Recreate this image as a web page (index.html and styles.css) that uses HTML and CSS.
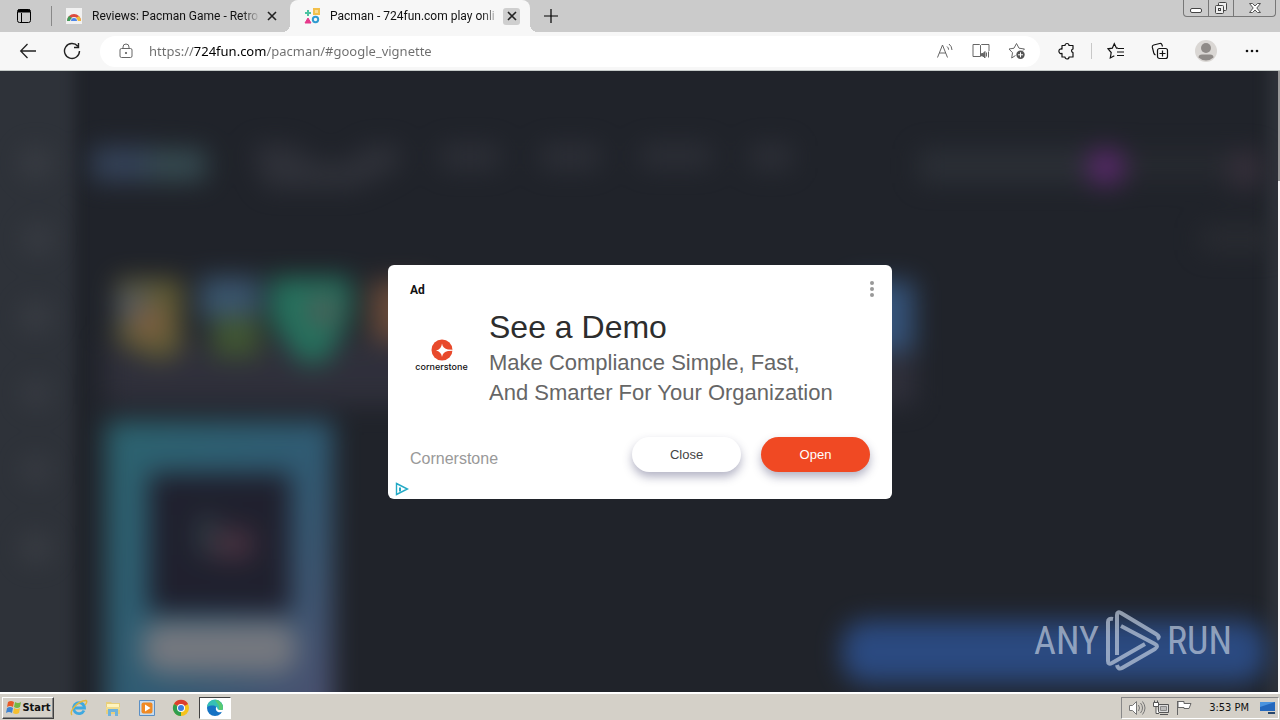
FILE: index.html
```html
<!DOCTYPE html>
<html lang="en">
<head>
<meta charset="UTF-8">
<meta name="viewport" content="width=device-width, initial-scale=1.0">
<title>Pacman - 724fun.com play online</title>
<link rel="stylesheet" href="styles.css">
</head>
<body>

<header class="tabstrip">
    <button class="tab-actions" aria-label="Tab actions">
        <svg width="16" height="16" viewBox="0 0 16 16" fill="none" stroke="#000"><rect x="1.500" y="1.500" width="13" height="13" rx="2"/><path d="M2 3h12" stroke-width="3"/><path d="M5.500 5v9"/></svg>
    </button>
    <div class="tab">
        <svg width="16" height="16" viewBox="0 0 16 16"><path d="M0 0h16v16H0z" fill="#f1f1f1"/><path d="M1 13a7 7 0 0 1 14 0h-3a4 4 0 0 0-8 0z" fill="#dd4b3e"/><path d="M1 13a7 7 0 0 1 2-5l3 2a4 4 0 0 0-2 3z" fill="#3f9c5a"/><path d="M15 13a7 7 0 0 0-2-5l-3 2a4 4 0 0 1 2 3z" fill="#f2bd3b"/><path d="M5 13a3 3 0 0 1 6 0z" fill="#4d86e8"/></svg>
        <span class="tab-title">Reviews: Pacman Game - Retro</span>
        <button class="tab-close" aria-label="Close tab"><svg width="10" height="10" viewBox="0 0 10 10" stroke="#222" stroke-width="1.6"><path d="M1 1l8 8M9 1l-8 8"/></svg></button>
    </div>
    <div class="tab active">
        <svg width="16" height="16" viewBox="0 0 16 16" fill="none" stroke-width="2"><path d="M4 2v6M1 5h6" stroke="#4cc3a0"/><rect x="10" y="1" width="5" height="5" stroke="#f3c04b" fill="#f8dc95"/><path d="M4 10l3 5H1z" stroke="#e6398b" fill="#e6398b" stroke-width="1"/><circle cx="11.500" cy="11.500" r="2.700" stroke="#2f9bd0"/></svg>
        <span class="tab-title">Pacman - 724fun.com play onli</span>
        <button class="tab-close" aria-label="Close tab"><svg width="10" height="10" viewBox="0 0 10 10" stroke="#222" stroke-width="1.6"><path d="M1 1l8 8M9 1l-8 8"/></svg></button>
    </div>
    <button class="new-tab" aria-label="New tab"><svg width="14" height="14" viewBox="0 0 14 14" stroke="#000"><path d="M7 0v14M0 7h14" stroke-width="1.2"/></svg></button>
    <div class="window-buttons">
        <button aria-label="Minimize"><svg width="14" height="14" viewBox="0 0 14 14" fill="#fff" stroke="#444"><rect x="1.500" y="7.500" width="11" height="4" rx="1.500"/></svg></button>
        <button aria-label="Restore"><svg width="14" height="14" viewBox="0 0 14 14" fill="#eee" stroke="#444"><rect x="4.500" y="1.500" width="8" height="8" rx="1"/><rect x="1.500" y="4.500" width="8" height="8" rx="1"/><rect x="4.500" y="7.500" width="2" height="2"/></svg></button>
        <button class="wide" aria-label="Close"><svg width="14" height="14" viewBox="0 0 14 14" fill="#fff" stroke="#555"><path d="M1.500 2.500h3L7 5l2.500-2.500h3L8.800 7l3.700 4.500h-3L7 9l-2.500 2.500h-3L5.200 7z"/></svg></button>
    </div>
</header>

<nav class="toolbar">
    <button aria-label="Back"><svg width="18" height="18" viewBox="0 0 18 18" fill="none" stroke="#222" stroke-width="1.300"><path d="M17 9H2M8.500 2L1.700 9l6.800 7"/></svg></button>
    <button aria-label="Refresh"><svg width="18" height="18" viewBox="0 0 18 18" fill="none" stroke="#222" stroke-width="1.400"><path d="M16.500 9A7.500 7.500 0 1 1 14.800 4.200M15.500 1v4.500H11"/></svg></button>
    <div class="address">
        <svg width="14" height="16" viewBox="0 0 14 16" fill="none" stroke="#666"><rect x="1" y="5.500" width="12" height="9" rx="1.500"/><path d="M4 5.500V4a3 3 0 0 1 6 0v1.500"/><circle cx="7" cy="10" r=".7" fill="#555"/></svg>
        <input class="url" type="text" aria-label="Address" value="https://724fun.com/pacman/#google_vignette">
        <button aria-label="Read aloud"><svg width="18" height="18" viewBox="0 0 18 18" fill="none" stroke="#666"><path d="M1.500 15.500L6.500 3l5 12.500M3.300 11h6.500M11 4.500a4 4 0 0 1 1.600 3.200M13 2a8 8 0 0 1 3 6"/></svg></button>
        <button aria-label="Immersive reader"><svg width="18" height="18" viewBox="0 0 18 18" fill="none" stroke="#666"><path d="M8.500 14.500H1v-12h6.500l1 1V14.500M8.500 3.500l1-1H17V9"/><path d="M9.500 11.500h1.500l2-2v6.500l-2-2H9.500z" fill="#666"/><path d="M14.500 10.500v4M16.500 9.500v6"/></svg></button>
        <button aria-label="Add to favorites"><svg width="18" height="18" viewBox="0 0 18 18" fill="none" stroke="#666"><path d="M7.500 13.500L3.700 16l.8-5.300L1 7l5-.8 2.500-4.700L11 6.200l5.500.8-1.500 1.500"/><circle cx="12.500" cy="12.800" r="4.200" fill="#555" stroke="none"/><path d="M12.500 10.300v5M10 12.800h5" stroke="#fff"/></svg></button>
    </div>
    <div class="tools">
        <button aria-label="Extensions"><svg width="18" height="18" viewBox="0 0 18 18" fill="none" stroke="#111" stroke-width="1.200"><path d="M4 3.500h3a2 2 0 0 1 4 0h4V7a1.900 1.900 0 0 0 0 3.700v4.300h-4a2 2 0 0 1-4 0H4v-3.600a2.300 2.300 0 1 1 0-4.300z" stroke-linejoin="round"/></svg></button>
        <i class="separator"></i>
        <button aria-label="Favorites"><svg width="18" height="18" viewBox="0 0 18 18" fill="none" stroke="#111" stroke-width="1.200"><path d="M11 6.200H9.500L7.300 1.700 5.300 6.200 1 6.800l3.200 3.700L3.300 16l4-2.200M11 6.500h6M10 10h7M10 13.500h7"/></svg></button>
        <button aria-label="Collections"><svg width="18" height="18" viewBox="0 0 18 18" fill="none" stroke="#111" stroke-width="1.200"><rect x="6.500" y="6.500" width="10" height="10" rx="2"/><path d="M11.500 8.500v6M8.500 11.500h6M4.500 13q-1.300-.6-1.700-2L1.300 5.200Q1 3.500 2.700 3l6-1.500q1.800-.4 2.300 1.300l.5 1.700"/></svg></button>
        <button class="avatar" aria-label="Profile"><svg width="22" height="22" viewBox="0 0 22 22"><circle cx="11" cy="11" r="11" fill="#dad7d4"/><circle cx="11" cy="8" r="5" fill="#8f8b88"/><path d="M3.500 17.500q0-3 3.500-3h8q3.500 0 3.500 3a11 11 0 0 1-15 0z" fill="#8f8b88"/></svg></button>
        <button aria-label="Settings and more"><svg width="18" height="18" viewBox="0 0 18 18" fill="#111"><circle cx="4" cy="9" r="1.300"/><circle cx="9" cy="9" r="1.300"/><circle cx="14" cy="9" r="1.300"/></svg></button>
    </div>
</nav>

<main class="page">
    <!-- blurred site behind the ad -->
    <svg class="backdrop" viewBox="0 0 1280 621" preserveAspectRatio="xMinYMin slice" aria-hidden="true">
        <defs>
            <filter id="blur" x="-50%" y="-50%" width="200%" height="200%" color-interpolation-filters="sRGB"><feGaussianBlur stdDeviation="13"/></filter>
            <filter id="side" x="-50%" y="-5%" width="200%" height="110%" color-interpolation-filters="sRGB"><feGaussianBlur stdDeviation="7 0"/></filter>
            <linearGradient id="card" x1="0" y1="0" x2="1" y2="1"><stop offset="0" stop-color="#2e6f7b"/><stop offset=".5" stop-color="#336580"/><stop offset="1" stop-color="#5a567c"/></linearGradient>
        </defs>
        <path d="M0 0h1280v621H0z" fill="#20232a"/>
        <path d="M-40 0H74v621H-40zM1268 0h50v621h-50z" fill="#2e3239" filter="url(#side)"/>
        <g filter="url(#blur)" opacity=".85">
            <g fill="#3d4047"><circle cx="36" cy="92" r="15"/><circle cx="38" cy="168" r="14"/><circle cx="36" cy="246" r="15"/><circle cx="36" cy="322" r="13"/><circle cx="36" cy="399" r="13"/><circle cx="36" cy="477" r="15"/></g>
            <path d="M92 76h62v34H92z" fill="#384861"/><path d="M148 78h58v32h-58z" fill="#3a5258"/>
            <path d="M252 74h40l25 18h30l20-17h33v20l-45 22h-90z" fill="#32343c"/>
            <path d="M440 74h60v24h-60zM540 74h60v24h-60zM640 74h72v22h-72zM750 74h42v24h-42z" fill="#30323a"/>
            <path d="M918 78h170v34H918z" fill="#2d3138"/><path d="M1120 80h110v28h-110z" fill="#282b31"/>
            <circle cx="1106" cy="96" r="19" fill="#632a76"/>
            <path d="M1230 80h32v36h-32z" fill="#3a323e"/><path d="M1200 156h75v24h-75z" fill="#2b2d33"/>
            <path d="M105 268h810v66H105z" fill="#32323e"/>
            <path d="M116 208h66v74l-25 8-41-20z" fill="#6c6636"/><path d="M116 218h34v35h-34z" fill="#5e6466"/><circle cx="150" cy="252" r="17" fill="#8e6846"/>
            <path d="M200 206h60v44h-60z" fill="#3e5d78"/><path d="M212 246h48v40h-48z" fill="#465f33"/>
            <path d="M270 206h81v42l-26 44h-24l-31-42z" fill="#277e66"/><circle cx="323" cy="240" r="14" fill="#5d655f"/>
            <path d="M370 210h60v60h-60z" fill="#73503c"/>
            <path d="M850 210h64v70h-64z" fill="#395c88"/>
            <path d="M106 350h227v332H106z" fill="url(#card)"/>
            <path d="M149 402h142v140H149z" fill="#20202f"/>
            <path d="M196 444h22v40h-22z" fill="#2f3d45"/><path d="M213 458h40v30h-40z" fill="#4d3443"/>
            <rect x="143" y="552" width="153" height="50" rx="18" fill="#84878e"/>
            <rect x="842" y="550" width="424" height="62" rx="24" fill="#2d5190"/>
        </g>
    </svg>

    <section class="ad">
        <div class="ad-top">
            <span class="ad-label">Ad</span>
            <button class="ad-menu" aria-label="Ad options"><svg width="4" height="16" viewBox="0 0 4 16" fill="#999"><circle cx="2" cy="2" r="2"/><circle cx="2" cy="8" r="2"/><circle cx="2" cy="14" r="2"/></svg></button>
        </div>
        <div class="ad-body">
            <div class="brand">
                <svg width="22" height="22" viewBox="0 0 22 22"><circle cx="11" cy="11" r="10.500" fill="#e8492b"/><path d="M11 4.500q.8 5.200 6 6l5 .2v1l-5 .2q-5.200.8-6 6-.8-5.200-6-6.300 5.200-.8 6-7.100z" fill="#fff"/></svg>
                <span>cornerstone</span>
            </div>
            <div class="copy">
                <h1>See a Demo</h1>
                <p>Make Compliance Simple, Fast,<br>And Smarter For Your Organization</p>
            </div>
        </div>
        <div class="ad-foot">
            <span class="advertiser">Cornerstone</span>
            <button class="pill">Close</button>
            <button class="pill open">Open</button>
        </div>
        <a class="adchoices" href="#" aria-label="AdChoices"><svg width="14" height="14" viewBox="0 0 14 14" fill="none" stroke="#22a9c5" stroke-width="1.400"><path d="M1.500 1.500l11 5.500-11 5.500z"/><path d="M5 5.500v4" stroke-width="2"/></svg></a>
    </section>

    <div class="watermark">
        <span>ANY</span>
        <svg width="56" height="62" viewBox="0 0 56 62" fill="none" stroke="currentColor" stroke-width="4" stroke-linejoin="round"><path d="M8 9q-5-1-5 3v39q0 4 4 2l33-19M12 45V5q0-4 4-2l35 21q5 3 1 5M16 16l34 18q4 2 0 5L17 58q-4 2-5-3"/></svg>
        <span>RUN</span>
    </div>
    <div class="scrollbar"></div>
</main>

<footer class="taskbar">
    <button class="start"><svg width="17" height="16" viewBox="0 0 17 16"><path d="M3 2q3-2 6 0L8 7Q5 5 2 7z" fill="#e85a27"/><path d="M10 2q3 2 6 0l-1 5q-3 2-6 0z" fill="#75b843"/><path d="M2 8q3-2 6 0l-1 5q-3-2-6 0z" fill="#3e83d1"/><path d="M9 8q3 2 6 0l-1 5q-3 2-6 0z" fill="#f5bf2f"/></svg>Start</button>
    <div class="quick">
        <button aria-label="Internet Explorer"><svg width="18" height="18" viewBox="0 0 18 18" fill="none"><path d="M14 11.500A5.500 5.500 0 1 1 14.500 9H5" stroke="#3fa9e0" stroke-width="2.800"/><path d="M2 16C-1 13 7 2 16 1.500c1.500.5.500 3-1 4.500" stroke="#e6b93c" stroke-width="1.400"/></svg></button>
        <button aria-label="Explorer"><svg width="18" height="18" viewBox="0 0 18 18"><path d="M2 3h5l1 1h8v11H2z" fill="#e8cf7c"/><path d="M3 5h12v3H3z" fill="#fff4be"/><path d="M2 8h14v3H2z" fill="#f0dc8f"/><path d="M4 10h10v7h-3v-4H7v4H4z" fill="#6fb3dc"/></svg></button>
        <button aria-label="Media Player"><svg width="18" height="18" viewBox="0 0 18 18"><path d="M1.500 1.500h15v15h-15z" fill="#c7dcf0" stroke="#5b8fc4"/><rect x="3.500" y="3.500" width="11" height="11" rx="2" fill="#f08a24"/><path d="M7 5.500L12.500 9 7 12.500z" fill="#fff"/></svg></button>
        <button aria-label="Chrome"><svg width="18" height="18" viewBox="0 0 18 18"><circle cx="9" cy="9" r="8" fill="#f6c31c"/><path d="M9 9L2 5a8 8 0 0 1 14 0z" fill="#dc3d2f"/><path d="M9 9v8A8 8 0 0 1 2 5z" fill="#2f9e4f"/><circle cx="9" cy="9" r="4" fill="#fff"/><circle cx="9" cy="9" r="3" fill="#3d7de0"/></svg></button>
        <button class="pressed" aria-label="Edge"><svg width="18" height="18" viewBox="0 0 18 18"><circle cx="9" cy="9" r="8" fill="#1673c4"/><path d="M1 8a8 8 0 0 1 16 1c0 3-4 3.500-6 2.500C12 7 7 5 1 8z" fill="#35c0b6"/><path d="M9 1a8 8 0 0 1 8 8c0 2-2 3-4 3V7z" fill="#58ca72"/><path d="M17 12.500c-4 2-8 0-7-4l1-.5c0 3 2.500 3.800 7 2.500z" fill="#fff"/></svg></button>
    </div>
    <div class="tray">
        <svg width="18" height="16" viewBox="0 0 18 16" fill="#fff" stroke="#777"><path d="M1.500 5.500h3l4-4v13l-4-4h-3z"/><path d="M10.500 5q2 3 0 6M12.500 3q4 5 0 10M14.500 1.500q5 6.500 0 13" fill="none"/></svg>
        <svg width="16" height="16" viewBox="0 0 16 16" fill="#ddd" stroke="#555"><path d="M5.500 4.500h10v8h-10zM7 14.500h8"/><path d="M7.500 6.500h6v4h-6z" fill="#bbb" stroke="#888"/><path d="M.5 2.500h5v4h-5zM1.500.5v2M4.500.5v2M3 6.500v7h3" fill="#fff"/></svg>
        <svg width="16" height="16" viewBox="0 0 16 16" fill="#fff" stroke="#666"><path d="M1.500 1v14M2 1.500h6v2h7l-2 5H8v-1H2z"/></svg>
        <time>3:53 PM</time>
        <svg width="16" height="14" viewBox="0 0 16 14"><path d="M0 1h15v9H0z" fill="#2468bd"/><path d="M0 1h15L0 6z" fill="#4b94df"/><path d="M8 11h7v2H8z" fill="#27466b"/></svg>
    </div>
</footer>

</body>
</html>
```
FILE: styles.css
```css
* {
    box-sizing: border-box;
}
body {
    margin: 0;
    height: 100vh;
    display: flex;
    flex-direction: column;
    overflow: hidden;
    font-family: "Noto Sans", "Open Sans", sans-serif;
    font-size: 12px;
    color: #111;
}
button {
    border: none;
    background: none;
    padding: 0;
    font: inherit;
    color: inherit;
    display: flex;
    align-items: center;
    justify-content: center;
    flex: none;
}
svg {
    display: block;
    flex: none;
}

/* tabs */
.tabstrip {
    height: 32px;
    display: flex;
    align-items: center;
    background: #cbcbcb;
    flex: none;
}
.tab-actions {
    width: 52px;
    height: 20px;
    padding-right: 4px;
    border-right: 1px solid #888;
}
.tab {
    width: 238px;
    height: 32px;
    padding: 0 10px 0 14px;
    display: flex;
    align-items: center;
    gap: 10px;
    font-family: Roboto, sans-serif;
}
.tab.active {
    width: 240px;
    background: #f7f7f7;
    border-radius: 8px 8px 0 0;
    position: relative;
}
.tab.active::before, .tab.active::after {
    content: "";
    position: absolute;
    bottom: 0;
    width: 8px;
    height: 8px;
}
.tab.active::before {
    right: 100%;
    background: radial-gradient(circle at 0 0, transparent 8px, #f7f7f7 8px);
}
.tab.active::after {
    left: 100%;
    background: radial-gradient(circle at 100% 0, transparent 8px, #f7f7f7 8px);
}
.tab-title {
    flex: 1;
    min-width: 0;
    overflow: hidden;
    white-space: nowrap;
    mask-image: linear-gradient(to left, transparent, #000 18px);
}
.tab-close {
    width: 17px;
    height: 17px;
    border-radius: 3px;
    margin-left: -7px;
}
.active .tab-close {
    background: #cfcfcf;
}
.new-tab {
    width: 42px;
    height: 32px;
}
.window-buttons {
    display: flex;
    align-self: flex-start;
    margin-left: auto;
    margin-right: 4px;
    border: 1px solid #777;
    border-top: none;
    border-radius: 0 0 4px 4px;
}
.window-buttons button {
    width: 25px;
    height: 16px;
    border-right: 1px solid #777;
}
.window-buttons .wide {
    width: 41px;
    border-right: none;
}

/* toolbar */
.toolbar {
    height: 39px;
    padding: 0 16px 0 6px;
    display: flex;
    align-items: center;
    background: #f7f7f7;
    border-bottom: 1px solid #c4cac8;
    flex: none;
}
.toolbar > button {
    width: 44px;
}
.address {
    flex: 1;
    height: 31px;
    margin-left: 6px;
    padding: 0 14px 0 19px;
    display: flex;
    align-items: center;
    gap: 18px;
    background: #fff;
    border-radius: 16px;
}
.url {
    flex: 1;
    min-width: 0;
    margin-left: -2px;
    padding: 0;
    border: none;
    outline: none;
    font: inherit;
    font-size: 13px;
    color: transparent;
    background: linear-gradient(to right, #6d6d6d 45px, #000 45px, #000 117px, #6d6d6d 117px);
    background-clip: text;
    -webkit-background-clip: text;
}
.tools {
    display: flex;
    align-items: center;
    gap: 26px;
    margin-left: 18px;
    padding-right: 3px;
}
.separator {
    width: 1px;
    height: 16px;
    margin: 0 -11px;
    background: #c8c8c8;
}

/* page */
.page {
    flex: 1;
    min-height: 0;
    display: flex;
    align-items: center;
    justify-content: center;
    position: relative;
    background: #20232a;
}
.backdrop {
    position: absolute;
    inset: 0;
    width: 100%;
    height: 100%;
}
.scrollbar {
    position: absolute;
    top: 0;
    right: 0;
    bottom: 0;
    width: 2px;
    background: linear-gradient(#999 110px, #f4f4f4 110px);
}

/* ad dialog */
.ad {
    position: relative;
    width: 504px;
    padding: 15px 22px 27px;
    border-radius: 6px;
    background: #fff;
    font-family: "Liberation Sans", Arial, sans-serif;
}
.ad-top {
    display: flex;
    justify-content: space-between;
    align-items: center;
    height: 18px;
}
.ad-label {
    padding-top: 2px;
    font-family: Roboto, sans-serif;
    font-size: 12px;
    font-weight: 700;
}
.ad-menu {
    width: 12px;
    margin-right: -8px;
}
.ad-body {
    display: flex;
    align-items: center;
    gap: 16px;
    margin-top: 8px;
}
.brand {
    width: 63px;
    padding-bottom: 2px;
    display: flex;
    flex-direction: column;
    align-items: center;
    font-family: Inter, sans-serif;
    font-size: 9px;
    font-weight: 500;
    line-height: 12px;
}
.copy h1 {
    margin: 0;
    font-size: 32px;
    font-weight: 400;
    line-height: 42px;
    color: #2d2d2d;
}
.copy p {
    margin: 0;
    font-size: 22px;
    line-height: 30px;
    color: #666;
}
.ad-foot {
    display: flex;
    align-items: center;
    gap: 20px;
    margin-top: 29px;
}
.advertiser {
    flex: 1;
    padding-top: 9px;
    font-size: 16px;
    color: #999;
}
.pill {
    width: 109px;
    height: 35px;
    border-radius: 18px;
    background: #fff;
    color: #444;
    font-size: 13px;
    box-shadow: 0 5px 10px rgba(40, 40, 90, 0.35);
}
.pill.open {
    background: #f04923;
    color: #fff;
}
.adchoices {
    position: absolute;
    left: 7px;
    bottom: 3px;
}

/* watermark */
.watermark {
    position: absolute;
    right: 48px;
    bottom: 20px;
    display: flex;
    align-items: center;
    gap: 6px;
    font-family: "Roboto Condensed", "Liberation Sans Narrow", Roboto, sans-serif;
    font-size: 38px;
    font-weight: 400;
    color: rgba(205, 215, 230, 0.65);
}

/* taskbar */
.taskbar {
    height: 28px;
    padding: 2px 1px 1px 2px;
    display: flex;
    align-items: center;
    background: #d4d0c8;
    border-top: 2px solid #fff;
    font-family: "DejaVu Sans Condensed", "DejaVu Sans", sans-serif;
    font-size: 11px;
    flex: none;
}
.start {
    width: 52px;
    height: 22px;
    font-weight: 700;
    border: 1px solid;
    border-color: #fff #404040 #404040 #fff;
    box-shadow: inset -1px -1px #888;
}
.quick {
    display: flex;
    align-items: center;
    gap: 2px;
    margin-left: 9px;
}
.quick button {
    width: 32px;
    height: 22px;
}
.quick .pressed {
    background: #fff;
    border: 1px solid;
    border-color: #404040 #fff #fff #404040;
}
.tray {
    height: 22px;
    margin-left: auto;
    padding: 0 2px 0 6px;
    display: flex;
    align-items: center;
    gap: 7px;
    border: 1px solid;
    border-color: #888 #fff #fff #888;
}
.tray time {
    margin: 0 4px 0 10px;
}
```
